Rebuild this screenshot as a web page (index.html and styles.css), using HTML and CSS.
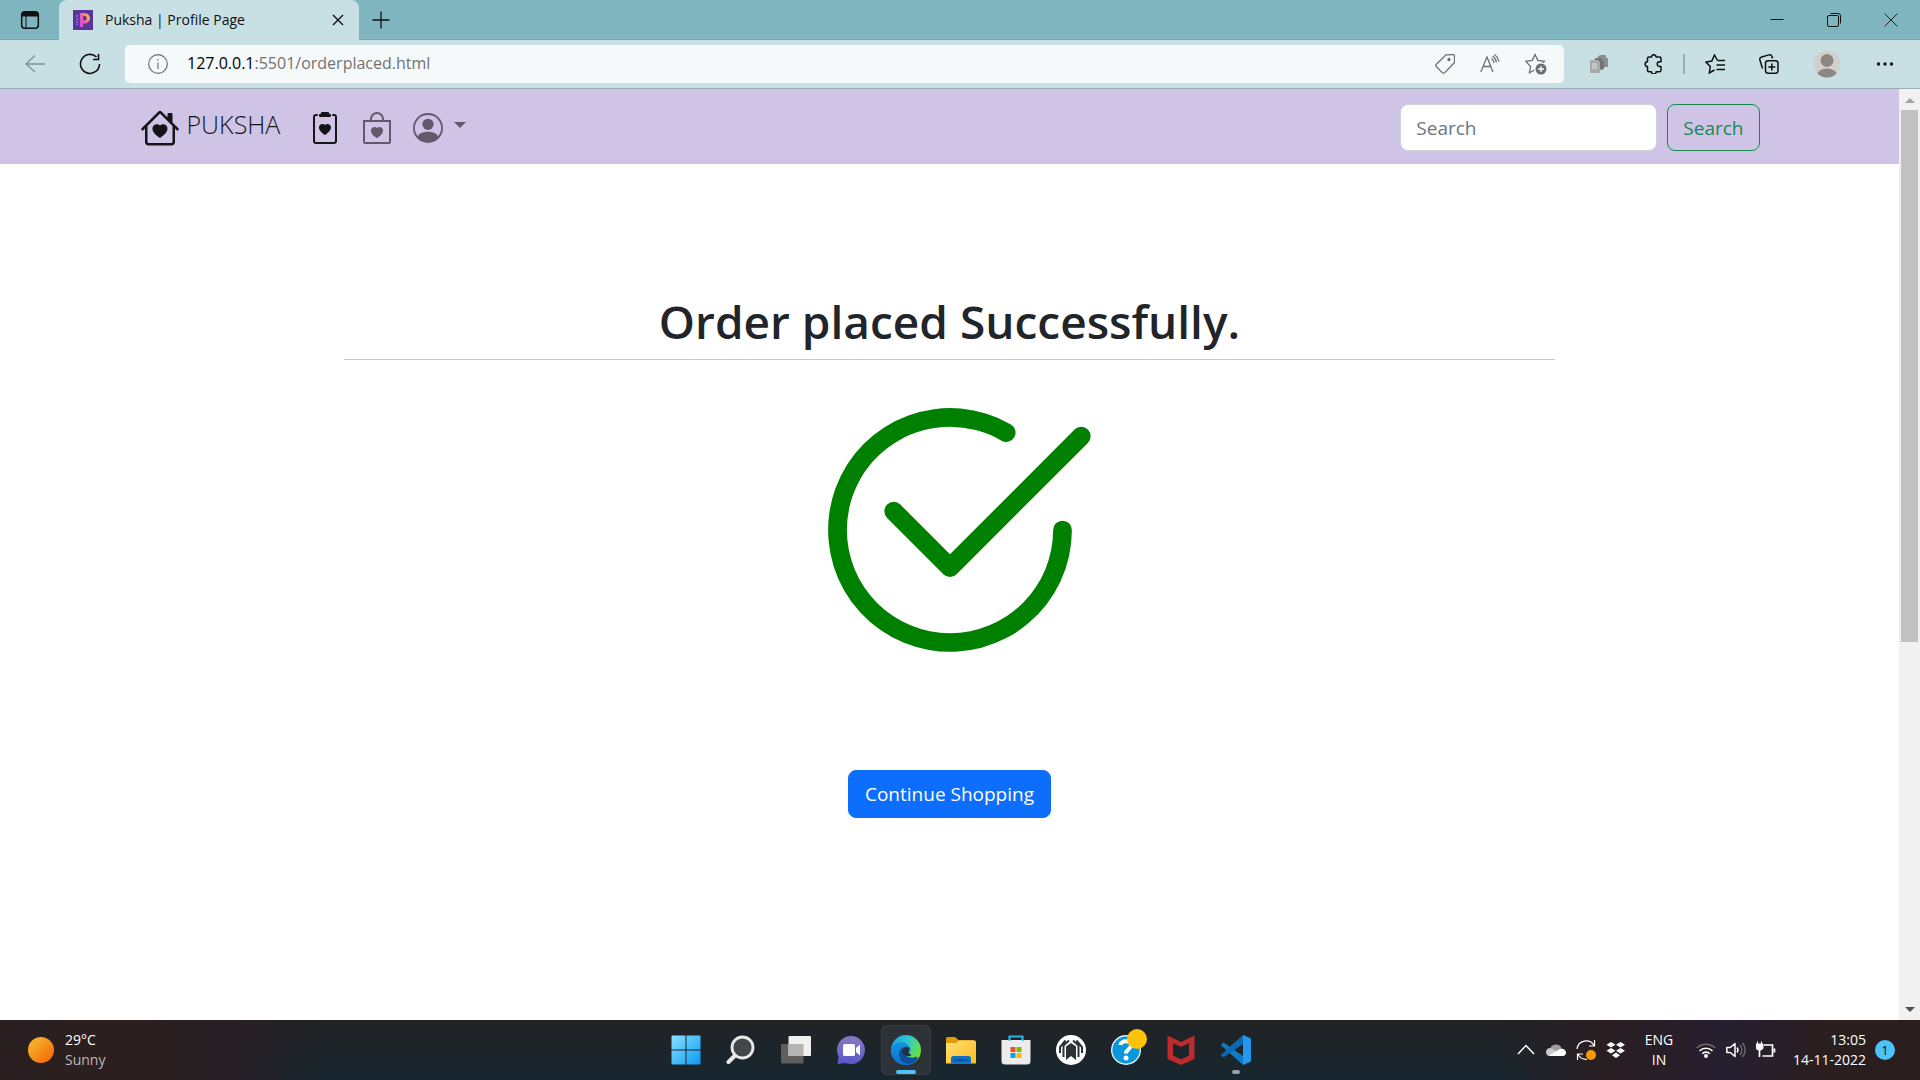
FILE: index.html
```html
<!DOCTYPE html>
<html lang="en">
<head>
<meta charset="utf-8">
<meta name="viewport" content="width=device-width, initial-scale=1">
<title>Puksha | Profile Page</title>
<link rel="stylesheet" href="styles.css">
</head>
<body>
<div class="desktop">
  <header class="tabbar">
    <button class="plain tab-actions" aria-label="Tab actions">
      <svg width="20" height="20" viewBox="0 0 20 20" fill="none" stroke="#111" stroke-width="1.5"><rect x="1.7" y="1.7" width="16.6" height="16.6" rx="3"/><path d="M2 3.5h16M2 5h16" stroke-width="3"/><path d="M6 6v12" stroke-width="1"/></svg>
    </button>
    <div class="tab">
      <svg width="20" height="20" viewBox="0 0 20 20"><defs><linearGradient id="fav" x1="0" y1="1" x2="1" y2="0"><stop offset="0" stop-color="#d24be0"/><stop offset=".6" stop-color="#f56e9c"/><stop offset="1" stop-color="#ffc04d"/></linearGradient></defs><path fill="#5a359c" d="M0 0h20v20H0z"/><path d="M8.500 17V4.500h3a3.500 3.500 0 0 1 0 7.500H9" fill="none" stroke="url(#fav)" stroke-width="3.200"/><path d="M4 5v10" stroke="#a06fe0" stroke-width="1.500" stroke-dasharray="2 1"/></svg>
      <span class="tab-title">Puksha | Profile Page</span>
      <button class="plain" aria-label="Close tab"><svg width="12" height="12" viewBox="0 0 12 12" stroke="#111" stroke-width="1.400"><path d="M1 1l10 10M11 1L1 11"/></svg></button>
    </div>
    <button class="plain new-tab" aria-label="New tab"><svg width="18" height="18" viewBox="0 0 18 18" stroke="#111" stroke-width="1.300"><path d="M9 .5v17M.5 9h17"/></svg></button>
    <div class="window-controls">
      <button class="plain" aria-label="Minimize"><svg width="14" height="14" viewBox="0 0 14 14" stroke="#111"><path d="M.5 6.500h13"/></svg></button>
      <button class="plain" aria-label="Restore"><svg width="14" height="14" viewBox="0 0 14 14" fill="none" stroke="#111"><rect x=".5" y="2.500" width="11" height="11" rx="1.500"/><path d="M3.500.5H11a2.500 2.500 0 0 1 2.500 2.500v7.500"/></svg></button>
      <button class="plain" aria-label="Close"><svg width="14" height="14" viewBox="0 0 14 14" stroke="#222"><path d="M.5.500l13 13M13.500.5l-13 13"/></svg></button>
    </div>
  </header>

  <div class="toolbar">
    <button class="plain" aria-label="Back"><svg width="20" height="20" viewBox="0 0 20 20" fill="none" stroke="#7f9396" stroke-width="1.300"><path d="M20 10H1M10 1.500L1 10l9 8"/></svg></button>
    <button class="plain reload" aria-label="Reload"><svg width="22" height="22" viewBox="0 0 22 22" fill="none" stroke="#111" stroke-width="1.600"><path d="M20.500 11a9.500 9.500 0 1 1-3-7"/><path d="M19.500 1v5.500H14"/></svg></button>
    <div class="address">
      <svg width="20" height="20" viewBox="0 0 20 20" fill="none" stroke="#6e6e6e" stroke-width="1.200"><circle cx="10" cy="10" r="9.300"/><path d="M10 8.500V15M10 5v1.600"/></svg>
      <a class="url" href="#"><b>127.0.0.1</b>:5501/orderplaced.html</a>
      <div class="address-tools">
        <button class="plain" aria-label="Shopping"><svg width="20" height="20" viewBox="0 0 20 20" fill="none" stroke="#6e6e6e" stroke-width="1.300"><path d="M11 .800l7-.1a1.500 1.500 0 0 1 1.500 1.500v6.300L9.800 18.600a1.800 1.800 0 0 1-2.500 0L1.400 12.700a1.800 1.800 0 0 1 0-2.500z"/><circle cx="14" cy="5.500" r="1" fill="#6e6e6e"/></svg></button>
        <button class="plain" aria-label="Read aloud"><svg width="20" height="20" viewBox="0 0 20 20" fill="none" stroke="#6e6e6e" stroke-width="1.300"><path d="M.8 18L7 3l6 15M3 12.500h8M11.500 4.500a6 6 0 0 1 2.500 4.500M12.500 2a10 10 0 0 1 4 6.500M14.500.5a12 12 0 0 1 4.500 7"/></svg></button>
        <button class="plain" aria-label="Add to favorites"><svg width="22" height="22" viewBox="0 0 22 22" fill="none" stroke="#6e6e6e" stroke-width="1.300"><path d="M9.500 17l-5 2.800 1-6.200L1 8.300l6.200-.9L10 1.500l2.800 5.900 6.500.9-1.500 1.500"/><circle cx="16" cy="16" r="5.500" fill="#6e6e6e" stroke="none"/><path d="M16 13v6M13 16h6" stroke="#fff"/></svg></button>
      </div>
    </div>
    <div class="toolbar-actions">
      <button class="plain" aria-label="Extension"><svg width="20" height="20" viewBox="0 0 20 20"><path fill="#8c8f90" d="M9 2l3-1h5v3h2v9h-5v3H9z"/><path fill="#737677" d="M6 4h7v3h2v8h-5V8H6z"/><path fill="#a8a9aa" d="M1 6h8l2 2v11H1z"/><path fill="#c4c4c5" d="M3 9h5v6H3z"/></svg></button>
      <div class="split">
        <button class="plain" aria-label="Extensions"><svg width="20" height="20" viewBox="0 0 20 20" fill="none" stroke="#111" stroke-width="1.500" stroke-linejoin="round"><path d="M6 3h2.500a2.300 2.300 0 0 1 4.600 0h3.400A1.500 1.500 0 0 1 18 4.500v3.300h-1.500a2.200 2.200 0 0 0 0 4.600H18v3.900a1.500 1.500 0 0 1-1.500 1.500h-3.400a2.300 2.300 0 0 1-4.600 0H6a1.500 1.500 0 0 1-1.500-1.500v-3.800a2.300 2.300 0 0 1 0-4.700V4.500A1.500 1.500 0 0 1 6 3z"/></svg></button>
        <span class="divider"></span>
        <button class="plain" aria-label="Favorites"><svg width="20" height="20" viewBox="0 0 20 20" fill="none" stroke="#111" stroke-width="1.500"><path d="M12.500 6.500L9.500 1 6.800 7 .9 8l4.400 4.500-1 6.500L9.500 16M12.500 6.500H20M11.500 11H20M11.500 15.500H20"/></svg></button>
      </div>
      <button class="plain" aria-label="Collections"><svg width="20" height="20" viewBox="0 0 20 20" fill="none" stroke="#111" stroke-width="1.500"><rect x="6.500" y="6.800" width="12.500" height="12.500" rx="2.500"/><path d="M12.800 9.500v7M9.300 13h7M3.500 14.500L.9 6A2.500 2.500 0 0 1 2.600 3L10 .9a2.500 2.500 0 0 1 3 1.600l.6 2"/></svg></button>
      <button class="plain" aria-label="Profile"><svg width="28" height="28" viewBox="0 0 28 28"><clipPath id="av"><circle cx="14" cy="14" r="13.500"/></clipPath><circle cx="14" cy="14" r="13.500" fill="#d2cfcc"/><g fill="#8d8783" clip-path="url(#av)"><circle cx="14" cy="10.500" r="6.500"/><ellipse cx="14" cy="25" rx="10" ry="6.500"/></g></svg></button>
      <button class="plain" aria-label="More"><svg width="20" height="20" viewBox="0 0 20 20" fill="#111"><circle cx="3.500" cy="10" r="1.700"/><circle cx="10" cy="10" r="1.700"/><circle cx="16.500" cy="10" r="1.700"/></svg></button>
    </div>
  </div>

  <div class="viewport">
    <div class="page">
      <nav class="navbar">
        <div class="container">
          <a class="brand" href="#">
            <svg width="40" height="40" viewBox="0 0 16 16" fill="currentColor"><path d="M8 6.982C9.664 5.309 13.825 8.236 8 12 2.175 8.236 6.336 5.309 8 6.982Z"/><path d="M8.707 1.500a1 1 0 0 0-1.414 0L.646 8.146a.5.5 0 0 0 .708.707L2 8.207V13.500A1.500 1.500 0 0 0 3.500 15h9a1.500 1.500 0 0 0 1.500-1.500V8.207l.646.646a.5.5 0 0 0 .708-.707L13 5.793V2.500a.5.5 0 0 0-.5-.5h-1a.5.5 0 0 0-.5.5v1.293L8.707 1.500ZM13 7.207V13.500a.5.5 0 0 1-.5.5h-9a.5.5 0 0 1-.5-.5V7.207l5-5 5 5Z"/></svg>
            <span>PUKSHA</span>
          </a>
          <a class="nav-link active" href="#" aria-label="Orders"><svg width="32" height="32" viewBox="0 0 16 16" fill="currentColor"><path d="M9.500 0a.5.5 0 0 1 .5.5.5.5 0 0 0 .5.5.5.5 0 0 1 .5.5V2a.5.5 0 0 1-.5.5h-5A.5.5 0 0 1 5 2v-.5a.5.5 0 0 1 .5-.5.5.5 0 0 0 .5-.5.5.5 0 0 1 .5-.5h3Z"/><path d="M3 2.500a.5.5 0 0 1 .5-.5H4a.5.5 0 0 0 0-1h-.5A1.500 1.500 0 0 0 2 2.500v12A1.500 1.500 0 0 0 3.500 16h9a1.500 1.500 0 0 0 1.500-1.500v-12A1.500 1.500 0 0 0 12.500 1H12a.5.5 0 0 0 0 1h.5a.5.5 0 0 1 .5.5v12a.5.5 0 0 1-.5.5h-9a.5.5 0 0 1-.5-.5v-12Z"/><path d="M8 6.482c1.664-1.673 5.825 1.254 0 5.018-5.825-3.764-1.664-6.690 0-5.018Z"/></svg></a>
          <a class="nav-link" href="#" aria-label="Bag"><svg width="32" height="32" viewBox="0 0 16 16" fill="currentColor"><path fill-rule="evenodd" d="M10.500 3.500a2.500 2.500 0 0 0-5 0V4h5v-.5Zm1 0V4H15v11a1 1 0 0 1-1 1H2a1 1 0 0 1-1-1V4h3.500v-.5a3.500 3.500 0 1 1 7 0ZM14 15V5H2v10h12ZM8 7.993c1.664-1.711 5.825 1.283 0 5.132-5.825-3.850-1.664-6.843 0-5.132Z"/></svg></a>
          <a class="nav-link account" href="#" aria-label="Account"><svg width="30" height="30" viewBox="0 0 16 16" fill="currentColor"><path d="M11 6a3 3 0 1 1-6 0 3 3 0 0 1 6 0z"/><path fill-rule="evenodd" d="M0 8a8 8 0 1 1 16 0A8 8 0 0 1 0 8zm8-7a7 7 0 0 0-5.468 11.370C3.242 11.226 4.805 10 8 10s4.757 1.225 5.468 2.370A7 7 0 0 0 8 1z"/></svg><span class="caret"></span></a>
          <form class="search">
            <input type="search" placeholder="Search" aria-label="Search">
            <button class="btn outline" type="button">Search</button>
          </form>
        </div>
      </nav>
      <main class="content">
        <h1>Order placed Successfully.</h1>
        <hr>
        <svg class="check" width="300" height="300" viewBox="0 0 16 16" fill="green"><path d="M2.500 8a5.500 5.500 0 0 1 8.250-4.764.5.5 0 0 0 .5-.866A6.500 6.500 0 1 0 14.500 8a.5.5 0 0 0-1 0 5.500 5.500 0 1 1-11 0z"/><path d="M15.354 3.354a.5.5 0 0 0-.708-.708L8 9.293 5.354 6.646a.5.5 0 1 0-.708.708l3 3a.5.5 0 0 0 .708 0l7-7z"/></svg>
        <button class="btn primary" type="button">Continue Shopping</button>
      </main>
    </div>
    <div class="scrollbar">
      <span class="arrow up"></span>
      <div class="track"><div class="thumb"></div></div>
      <span class="arrow down"></span>
    </div>
  </div>

  <footer class="taskbar">
    <div class="weather">
      <span class="sun"></span>
      <div class="two-line"><span>29°C</span><span class="muted">Sunny</span></div>
    </div>
    <div class="apps">
      <button class="plain app" aria-label="Start"><svg width="30" height="30" viewBox="0 0 30 30"><defs><linearGradient id="win" x1="0" y1="0" x2="1" y2="1" ><stop offset="0" stop-color="#8be3ff"/><stop offset="1" stop-color="#0a98f5"/></linearGradient></defs><path fill="url(#win)" d="M1.500.5H14.500V14.500H.5V1.500a1 1 0 0 1 1-1zM15.500.5h13a1 1 0 0 1 1 1v13h-14zM.5 15.500h14v14h-13a1 1 0 0 1-1-1zM15.500 15.500h14v13a1 1 0 0 1-1 1h-13z"/></svg></button>
      <button class="plain app" aria-label="Search"><svg width="30" height="30" viewBox="0 0 30 30" fill="#43474a" stroke="#e9e9e9"><path d="M9.500 20L2.500 27" stroke-width="4" stroke-linecap="round"/><circle cx="16.500" cy="12.500" r="10.500" stroke-width="2.800"/></svg></button>
      <button class="plain app" aria-label="Task view"><svg width="30" height="30" viewBox="0 0 30 30"><rect y="9" width="22.500" height="19.500" rx="1" fill="#5f5f60"/><rect x="7.500" y="1" width="22.500" height="20" rx="1" fill="#f0f0f0"/><path d="M7.500 9h15v12h-15z" fill="#b4b4b4"/></svg></button>
      <button class="plain app" aria-label="Chat"><svg width="30" height="30" viewBox="0 0 30 30"><defs><linearGradient id="chat" x1="0" y1="0" x2="0" y2="1"><stop offset="0" stop-color="#8a79c4"/><stop offset="1" stop-color="#5558c8"/></linearGradient></defs><path fill="url(#chat)" d="M15 1a14 14 0 1 1-5.500 26.900L1.500 29l1-7.500A14 14 0 0 1 15 1z"/><rect x="7" y="9" width="12" height="12" rx="1.500" fill="#fff"/><path fill="#fff" d="M20 13l4-3.500v11L20 17z"/></svg></button>
      <button class="plain app active" aria-label="Edge"><svg width="30" height="30" viewBox="0 0 30 30"><defs><linearGradient id="e1" x1="0" y1="0" x2="1" y2=".5"><stop offset="0" stop-color="#1b9de2"/><stop offset=".5" stop-color="#2cc5d5"/><stop offset="1" stop-color="#6be33d"/></linearGradient><linearGradient id="e2" x1="0" y1="0" x2="0" y2="1"><stop offset="0" stop-color="#1595df"/><stop offset="1" stop-color="#0c6fcf"/></linearGradient></defs><circle cx="15" cy="15" r="15" fill="url(#e1)"/><path fill="url(#e2)" d="M.1 14C2 8 9 5.500 14 8c4 1.800 6 5 5.500 8l-5 5 4 5 7.500-.5A15 15 0 0 1 .1 14z"/><path fill="#0e4f9c" d="M12.500 12c-6 3-6 12 1 16 5 2 10 0 12.500-3.500 1.500-2.500 0-3-1.500-2.500-4 1.500-9.500.5-11.500-4-1-2.500-.8-4.500-.5-6z"/><path fill="#23323a" d="M17.500 12.500c-3-1.800-6 0-6 3.500 0 3 3 5.500 6.500 5 2-.3 3-.8 2-1.500-2.500-1.500-3.500-2-1.500-5 .2-.8-.2-1.500-1-2z"/></svg></button>
      <button class="plain app" aria-label="Files"><svg width="30" height="30" viewBox="0 0 30 30"><defs><linearGradient id="fo" x1="0" y1="0" x2="1" y2="1"><stop offset="0" stop-color="#ffdf78"/><stop offset="1" stop-color="#fbbd1e"/></linearGradient></defs><path fill="#de9c0c" d="M0 3.500a1.500 1.500 0 0 1 1.500-1.500H9l3.500 3H28v6H0z"/><path fill="url(#fo)" d="M0 8h10l3-2.500h15.500A1.500 1.500 0 0 1 30 7v21.500H0z"/><path fill="#0f6fc4" d="M5 28.500v-5a2.500 2.500 0 0 1 2.500-2.500h15a2.500 2.500 0 0 1 2.500 2.500v5z"/><path d="M8.500 25h13" stroke="#0a4b94" stroke-width="1.500"/></svg></button>
      <button class="plain app" aria-label="Store"><svg width="30" height="30" viewBox="0 0 30 30"><path d="M8.500 6V1.500h13V6" fill="none" stroke="#2bb2e8" stroke-width="2"/><path fill="#ececec" d="M.5 5h29v21a3.500 3.500 0 0 1-3.500 3.500H4A3.500 3.500 0 0 1 .5 26z"/><path d="M8.500 1.500V6M21.500 1.500V6" stroke="#2bb2e8" stroke-width="1.500"/><path fill="#f04e23" d="M9.500 12h5v5h-5z"/><path fill="#7db700" d="M15.500 12h5v5h-5z"/><path fill="#0aa3ec" d="M9.500 18h5v5h-5z"/><path fill="#fdb60b" d="M15.500 18h5v5h-5z"/></svg></button>
      <button class="plain app" aria-label="Assistant"><svg width="30" height="30" viewBox="0 0 30 30" fill="none" stroke="#2b3236" stroke-width="2"><circle cx="15" cy="15" r="15" fill="#fff" stroke="none"/><path fill="#2b3236" stroke="none" d="M10 11.500L15 8l5 3.500V25l-5-4-5 4z"/><path d="M7.500 22V10.500L13 5.500M4 18v-6L9.500 5.500M22.500 22V10.500L17 5.500M26 18v-6l-5.500-6.500"/></svg></button>
      <button class="plain app" aria-label="Help"><svg width="30" height="30" viewBox="0 0 30 30"><circle cx="15" cy="15" r="14.300" fill="#0897d8" stroke="#dff0f8" stroke-width="1.400"/><path d="M9.500 10c.5-5 10.500-5 10.500.3 0 4-5 4-5 8.200" fill="none" stroke="#fff" stroke-width="4"/><circle cx="15" cy="23" r="2.500" fill="#fff"/></svg><span class="notice"></span></button>
      <button class="plain app" aria-label="Security"><svg width="30" height="30" viewBox="0 0 30 30"><path fill="#bd2b2c" d="M1.500.500L15 7 28.500.5V24L15 30 1.500 24zM7 8v12.500l8 4 8-4V8l-8 4z"/></svg></button>
      <button class="plain app running" aria-label="Code"><svg width="30" height="30" viewBox="0 0 30 30"><path fill="#1379c4" d="M2.500 7.500L.5 9.300a1 1 0 0 0 0 1.500L22 30V21z"/><path fill="#0b69b3" d="M2.500 22.500l-2-1.800a1 1 0 0 1 0-1.500L22 0v9z"/><path fill="#2498ec" d="M22 0l7 3a1.500 1.500 0 0 1 1 1.500v21a1.500 1.500 0 0 1-1 1.500l-7 3z"/></svg></button>
    </div>
    <div class="tray">
      <div class="tray-icons">
        <svg width="20" height="20" viewBox="0 0 20 20" fill="none" stroke="#fff" stroke-width="1.500"><path d="M2 14l8-8.500 8 8.500"/></svg>
        <svg width="20" height="20" viewBox="0 0 20 20"><path fill="#9d9d9d" d="M4 9a6.200 6.200 0 0 1 11.500-1L17 12H4z"/><path fill="#c9c9c9" d="M0 12a4 4 0 0 1 6-3.500l9 5.500-6 2H4a4 4 0 0 1-4-4z"/><path fill="#fff" d="M3 15.500L13 9.500c4-2 7 .5 7 3.200 0 2-1.500 3.300-3.500 3.300H4z"/></svg>
        <svg width="20" height="20" viewBox="0 0 20 20" fill="none" stroke="#fff" stroke-width="1.200"><path d="M1 9C2 0 14-2 18 5.500M18.500 0v6H13M1.500 20v-6H7M2 14.500C4 18 7 19.500 11 19.300"/><circle cx="15" cy="15" r="5" fill="#ff9800" stroke="none"/></svg>
        <svg width="20" height="20" viewBox="0 0 20 20" fill="#fff"><path d="M5 2l4.500 2.800L5 7.600.5 4.800zM14.500 2L19 4.800l-4.500 2.800L10 4.800zM5 8l4.500 2.800L5 13.600.5 10.800zM14.500 8l4.500 2.800-4.500 2.800-4.500-2.800zM10 12.500l4 2.700-4 2.800-4-2.800z"/></svg>
      </div>
      <div class="two-line lang"><span>ENG</span><span>IN</span></div>
      <div class="tray-icons">
        <svg width="20" height="20" viewBox="0 0 20 20" fill="none" stroke="#fff" stroke-width="1.600"><path d="M.8 8a13 13 0 0 1 18.400 0" stroke="#75696b"/><path d="M3.500 11a9.200 9.200 0 0 1 13 0M6.200 13.700a5.400 5.400 0 0 1 7.600 0"/><circle cx="10" cy="16" r="1.200" fill="#fff"/></svg>
        <svg width="20" height="20" viewBox="0 0 20 20" fill="none" stroke="#fff" stroke-width="1.500"><path d="M.8 7.500h3.500L9 3.500v13l-4.700-4H.8z" stroke-linejoin="round"/><path d="M11 7.500a4 4 0 0 1 0 5"/><path d="M14 5a8 8 0 0 1 0 10M16.500 3a10.500 10.500 0 0 1 0 14" stroke="#6f6670"/></svg>
        <svg width="20" height="20" viewBox="0 0 20 20" fill="none" stroke="#fff" stroke-width="1.700"><path d="M8 5h8.500v11H6.500M18.500 8.500v4M3.500 8v9"/><path d="M0 4h7v4.500L5 10H2L0 8.500zM1.500 1.500V5M5.500 1.500V5" fill="#fff" stroke-width="1"/></svg>
      </div>
      <div class="two-line clock"><span>13:05</span><span>14-11-2022</span></div>
      <span class="count">1</span>
    </div>
  </footer>
</div>
</body>
</html>
```

FILE: styles.css
```css
* { box-sizing: border-box; }

body {
  margin: 0;
  font-family: "Open Sans", "Noto Sans", sans-serif;
  color: #212529;
}

svg { display: block; flex: none; }
a { color: inherit; text-decoration: none; }

.plain {
  display: flex;
  align-items: center;
  justify-content: center;
  padding: 0;
  border: 0;
  background: none;
  flex: none;
}

.desktop {
  display: flex;
  flex-direction: column;
  min-height: 100vh;
}

/* Browser tab strip */
.tabbar {
  display: flex;
  align-items: stretch;
  height: 40px;
  background: #7eb5be;
  box-shadow: inset 0 -1px #74a9b2;
}
.tab-actions { width: 59px; }
.tab {
  display: flex;
  align-items: center;
  gap: 12px;
  width: 300px;
  padding: 0 15px 0 14px;
  border-radius: 8px 8px 0 0;
  background: #c8dfe3;
}
.tab-title {
  flex: 1;
  padding-bottom: 2px;
  font-size: 14px;
  color: #111;
  white-space: nowrap;
}
.new-tab { width: 44px; }
.window-controls {
  display: flex;
  gap: 43px;
  margin-left: auto;
  padding-right: 22px;
}

/* Browser toolbar */
.toolbar {
  display: flex;
  align-items: center;
  height: 49px;
  padding: 0 25px;
  border-bottom: 1px solid #98aeb2;
  background: #c8dfe3;
}
.reload { margin: 0 24px 0 34px; }
.address {
  display: flex;
  flex: 1;
  align-items: center;
  height: 38px;
  padding: 0 17px 0 23px;
  border-radius: 5px;
  background: #f5f9fa;
}
.url {
  margin-left: 19px;
  padding-bottom: 2px;
  font-size: 16px;
  color: #727272;
}
.url b { font-weight: 400; color: #000; }
.address-tools {
  display: flex;
  align-items: center;
  gap: 25px;
  margin-left: auto;
}
.toolbar-actions {
  display: flex;
  align-items: center;
  gap: 34px;
  margin-left: 25px;
}
.split { display: flex; align-items: center; gap: 20px; }
.divider { width: 2px; height: 20px; background: #9bb0b4; }

/* Web page */
.viewport { display: flex; flex: 1; background: #fff; }
.page { flex: 1; min-width: 0; }
.navbar { background: #cfc4e6; }
.container {
  display: flex;
  align-items: center;
  max-width: 1650px;
  min-height: 75px;
  margin: 0 auto;
  padding: 2px 15px 0;
}
.brand {
  display: flex;
  align-items: center;
  gap: 7px;
  margin-right: 29px;
  font-size: 25px;
  font-weight: 300;
  line-height: 32px;
  color: #151518;
}
.brand span { padding-bottom: 7px; }
.nav-link { margin-right: 20px; color: #615a6c; }
.nav-link.active { color: #151518; }
.account { display: flex; gap: 11px; align-items: center; }
.caret {
  margin-bottom: 5px;
  border: 6px solid transparent;
  border-top-color: currentColor;
  border-bottom: 0;
}
.search { display: flex; gap: 10px; margin-left: auto; }
.search input {
  width: 257px;
  height: 47px;
  padding: 0 15px;
  border: 1px solid #ced4da;
  border-radius: 8px;
  background: #fff;
  font: 400 19px/30px "Open Sans", "Noto Sans", sans-serif;
}
.search input::placeholder { color: #6c757d; opacity: 1; }
.btn {
  height: 48px;
  padding: 0 16px;
  border: 1px solid;
  border-radius: 8px;
  font: 400 19px/30px "Open Sans", "Noto Sans", sans-serif;
}
.outline { height: 47px; padding: 0 15px; border-color: #198754; background: none; color: #198754; }
.primary { border-color: #0d6efd; background: #0d6efd; color: #fff; }

.content {
  display: flex;
  flex-direction: column;
  align-items: center;
  max-width: 1211px;
  margin: 0 auto;
  padding: 127px 0 60px;
}
.content h1 {
  margin: 0;
  font-size: 46px;
  font-weight: 600;
  line-height: 60px;
}
.content hr {
  width: 100%;
  margin: 8px 0 20px;
  border: 0;
  border-top: 1px solid #c8c9ca;
}
.check { margin-bottom: 90px; }

.scrollbar {
  display: flex;
  flex-direction: column;
  align-items: center;
  width: 21px;
  padding: 9px 0 8px;
  background: #f1f1f1;
}
.track { flex: 1; width: 17px; margin: 7px 0; }
.thumb { height: 59.8%; background: #c1c1c1; }
.arrow { border: 5px solid transparent; }
.up { border-top: 0; border-bottom-color: #a3a3a3; }
.down { border-bottom: 0; border-top-color: #505050; }

/* Windows taskbar */
.taskbar {
  display: grid;
  grid-template-columns: 1fr auto 1fr;
  align-items: center;
  height: 60px;
  background:
    linear-gradient(90deg, #2a1f20 0%, #2c1f20 7%, #261f24 12%, transparent 17%, transparent 78%, #2a1e22 84%, #251f30 90%, #2b1e1f 95%, #2b1e1f 100%),
    linear-gradient(#222325, #17262f);
  color: #fff;
  font-size: 14px;
}
.weather { display: flex; align-items: center; gap: 11px; padding-left: 28px; }
.sun {
  width: 26px;
  height: 26px;
  border-radius: 50%;
  background: linear-gradient(135deg, #f5b82e 10%, #f56a08 90%);
}
.two-line { display: flex; flex-direction: column; line-height: 20px; }
.muted { color: #bcb8b8; }
.apps { display: flex; gap: 5px; padding-left: 2px; }
.app { position: relative; width: 50px; height: 50px; border-radius: 6px; }
.app.active { background: #2c3237; box-shadow: inset 0 0 0 1px #383d41; }
.app.active::after,
.app.running::after {
  content: "";
  position: absolute;
  bottom: 1px;
  width: 20px;
  height: 4px;
  border-radius: 2px;
  background: #4cc2ff;
}
.app.running::after { width: 8px; background: #9a9fa2; }
.notice {
  position: absolute;
  top: 4px;
  right: 4px;
  width: 20px;
  height: 20px;
  border-radius: 50%;
  background: #ffc10a;
}
.tray {
  display: flex;
  align-items: center;
  justify-content: flex-end;
  padding-right: 25px;
}
.tray-icons { display: flex; gap: 10px; }
.lang { width: 66px; margin-right: 4px; align-items: center; }
.clock { width: 90px; margin-right: 9px; align-items: flex-end; }
.count {
  width: 20px;
  height: 20px;
  border-radius: 50%;
  background: #4cc2ff;
  color: #111;
  font-size: 13px;
  line-height: 20px;
  text-align: center;
}
```
